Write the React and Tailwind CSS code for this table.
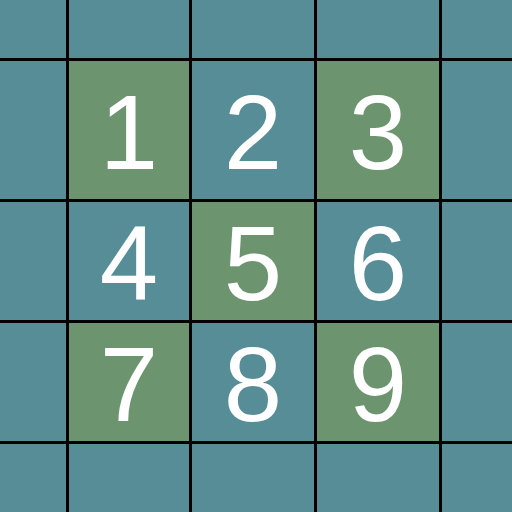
const rows = [
  [null, null, null, null, null],
  [null, { n: 1, g: true }, { n: 2 }, { n: 3, g: true }, null],
  [null, { n: 4 }, { n: 5, g: true }, { n: 6 }, null],
  [null, { n: 7, g: true }, { n: 8 }, { n: 9, g: true }, null],
  [null, null, null, null, null],
];

export default function App() {
  return (
    <div className="w-[512px] h-[512px] bg-black grid grid-cols-[66px_120px_122px_122px_70px] grid-rows-[58px_138px_118px_118px_68px] gap-[3px] overflow-hidden">
      {rows.flat().map((c, i) => (
        <div
          key={i}
          className={`flex items-center justify-center pt-[4px] text-white text-[105px] leading-none font-['Liberation_Sans',Arial,sans-serif] ${
            c && c.g ? 'bg-[#6b946f]' : 'bg-[#568d97]'
          }`}
        >
          {c ? c.n : ''}
        </div>
      ))}
    </div>
  );
}
